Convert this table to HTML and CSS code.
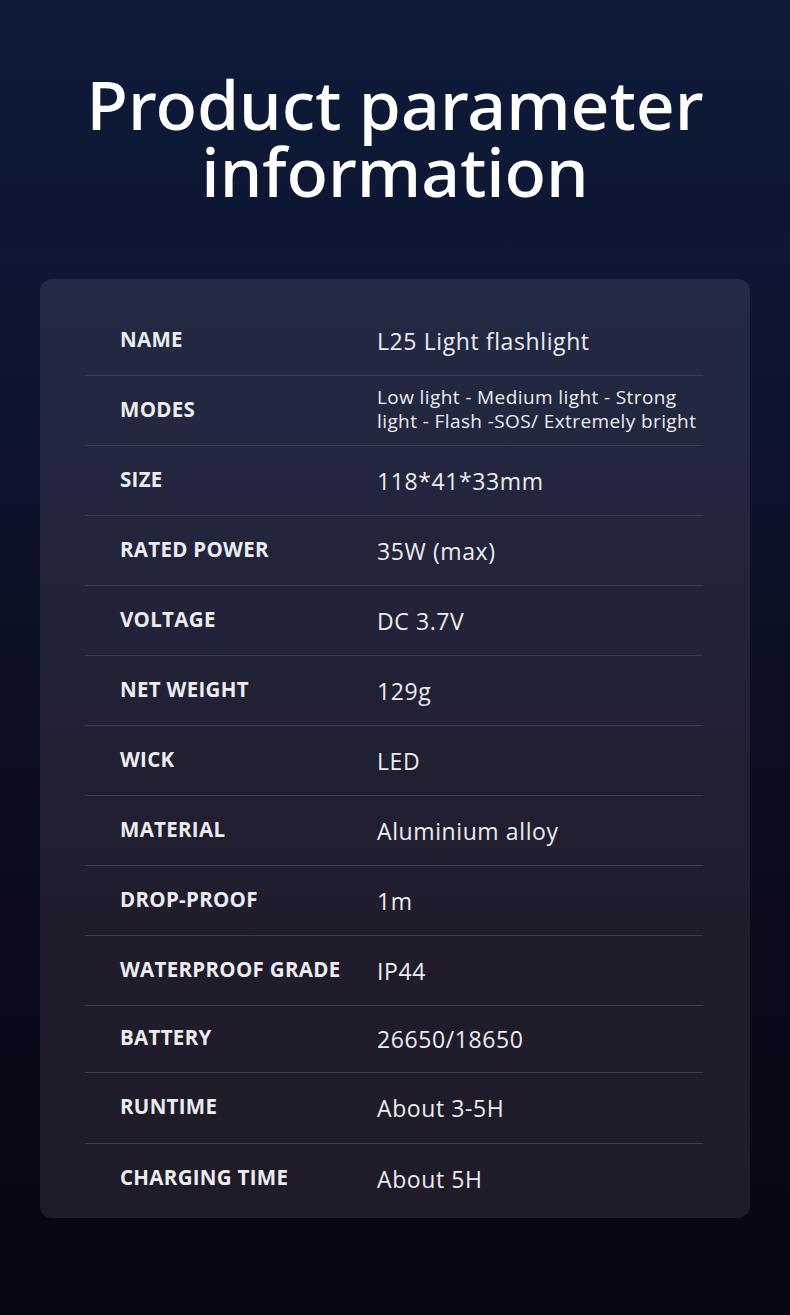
FILE: index.html
```html
<!DOCTYPE html>
<html lang="en">
<head>
<meta charset="utf-8">
<title>Product parameter information</title>
<link rel="stylesheet" href="styles.css">
</head>
<body>
<main class="page">
  <h1 class="title"><span class="line">Product parameter</span><span class="line">information</span></h1>
  <section class="card">
    <div class="row"><div class="label">NAME</div><div class="value">L25 Light flashlight</div></div>
    <div class="row"><div class="label">MODES</div><div class="value small">Low light - Medium light - Strong<br>light - Flash -SOS/ Extremely bright</div></div>
    <div class="row"><div class="label">SIZE</div><div class="value">118*41*33mm</div></div>
    <div class="row"><div class="label">RATED POWER</div><div class="value">35W (max)</div></div>
    <div class="row"><div class="label">VOLTAGE</div><div class="value">DC 3.7V</div></div>
    <div class="row"><div class="label">NET WEIGHT</div><div class="value">129g</div></div>
    <div class="row"><div class="label">WICK</div><div class="value">LED</div></div>
    <div class="row"><div class="label">MATERIAL</div><div class="value">Aluminium alloy</div></div>
    <div class="row"><div class="label">DROP-PROOF</div><div class="value">1m</div></div>
    <div class="row"><div class="label">WATERPROOF GRADE</div><div class="value">IP44</div></div>
    <div class="row short"><div class="label">BATTERY</div><div class="value">26650/18650</div></div>
    <div class="row tall"><div class="label">RUNTIME</div><div class="value">About 3-5H</div></div>
    <div class="row"><div class="label">CHARGING TIME</div><div class="value">About 5H</div></div>
  </section>
</main>
</body>
</html>
```
FILE: styles.css
```css
* { box-sizing: border-box; }
html, body { margin: 0; padding: 0; }
body {
  width: 790px;
  height: 1315px;
  overflow: hidden;
  background: linear-gradient(180deg, #0d1a38 0%, #0e1733 20%, #0b0d1f 60%, #0a0512 100%);
  font-family: "Open Sans", "Noto Sans", sans-serif;
  color: #fff;
}
.page {
  display: flex;
  flex-direction: column;
  align-items: center;
  padding-top: 70px;
}
.title {
  margin: 0;
  font-family: "Noto Sans", sans-serif;
  font-weight: 500;
  font-size: 68px;
  line-height: 67px;
  text-align: center;
  color: #fff;
  display: flex;
  flex-direction: column;
  align-items: center;
}
.title .line { display: block; }
.card {
  margin-top: 75px;
  width: 710px;
  border-radius: 12px;
  background: linear-gradient(180deg, #232a45 0%, #222339 35%, #201c2c 70%, #201b28 100%);
  padding: 27px 47px 4px 45px;
  display: flex;
  flex-direction: column;
}
.row {
  display: flex;
  align-items: center;
  height: 70px;
  border-bottom: 1px solid #3a3c50;
}
.row.short { height: 67px; }
.row.tall { height: 71px; }
.row:last-child { border-bottom: none; }
.label {
  width: 292px;
  padding-left: 35px;
  font-weight: 700;
  font-size: 20.5px;
  letter-spacing: 0.3px;
  color: #ececf0;
  margin-top: -4px;
}
.value {
  font-size: 23px;
  letter-spacing: 0.6px;
  color: #ececf0;
}
.value.small {
  font-size: 19px;
  letter-spacing: 0.4px;
  line-height: 24px;
  margin-top: -3px;
}
```
